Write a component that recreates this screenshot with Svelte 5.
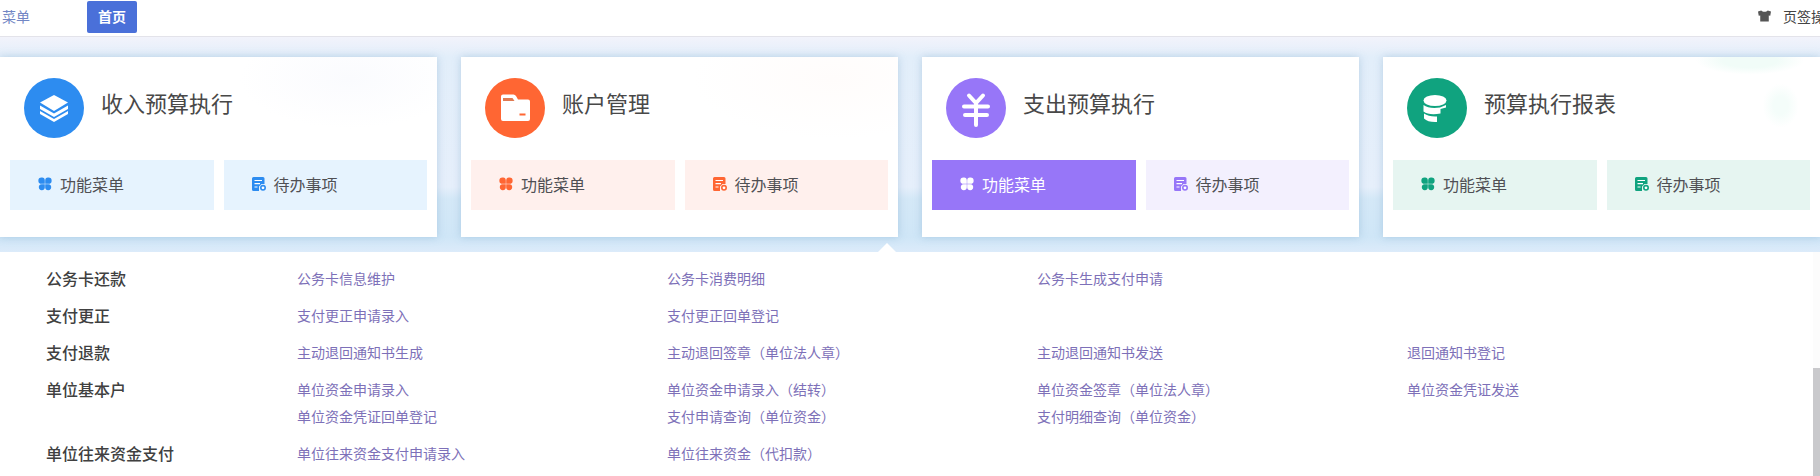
<script lang="ts">
	let activeCard = 'zhichu';

	const cards = [
		{ id: 'shouru', title: '收入预算执行', color: 'blue' },
		{ id: 'zhanghu', title: '账户管理', color: 'orange' },
		{ id: 'zhichu', title: '支出预算执行', color: 'purple' },
		{ id: 'baobiao', title: '预算执行报表', color: 'green' }
	];

	const groups = [
		{ name: '公务卡还款', links: ['公务卡信息维护', '公务卡消费明细', '公务卡生成支付申请'] },
		{ name: '支付更正', links: ['支付更正申请录入', '支付更正回单登记'] },
		{
			name: '支付退款',
			links: ['主动退回通知书生成', '主动退回签章（单位法人章）', '主动退回通知书发送', '退回通知书登记']
		},
		{
			name: '单位基本户',
			links: [
				'单位资金申请录入',
				'单位资金申请录入（结转）',
				'单位资金签章（单位法人章）',
				'单位资金凭证发送',
				'单位资金凭证回单登记',
				'支付申请查询（单位资金）',
				'支付明细查询（单位资金）'
			]
		},
		{ name: '单位往来资金支付', links: ['单位往来资金支付申请录入', '单位往来资金（代扣款）'] }
	];
</script>

<div class="page">
	<header class="topbar">
		<a href="#menu" class="menu-link">菜单</a>
		<button class="tab">首页</button>
		<div class="tools">
			<svg class="skin" viewBox="0 0 14 12" aria-hidden="true">
				<path d="M3.5 0.2C5 2 9 2 10.5 0.2L14 1.2L13.2 5.8L11.6 5.4V11.8H2.4V5.4L0.8 5.8L0 1.2Z" />
			</svg>
			<button class="tab-ops">页签操作</button>
		</div>
	</header>

	<main class="cards">
		{#each cards as card}
			<section class="card {card.color}">
				<div class="card-head">
					<span class="circle">
						{#if card.color === 'blue'}
							<svg viewBox="0 0 60 60" aria-hidden="true">
								<path d="M30 17L44 24.5L30 33L16 24.5Z" fill="#fff" />
								<path d="M16 27.5L30 35.5L44 27.5V31L30 39L16 31Z" fill="#fff" />
								<path d="M16 33L30 41L44 33V36L30 44L16 36Z" fill="#fff" />
							</svg>
						{:else if card.color === 'orange'}
							<svg viewBox="0 0 60 60" aria-hidden="true">
								<path
									d="M18 16.5H28.5Q30 16.5 31 18L33 21.5H43Q45 21.5 45 23.5V41Q45 43 43 43H18Q16 43 16 41V18.5Q16 16.5 18 16.5Z"
									fill="#fff"
								/>
								<path d="M18 20H27.5L29.5 23H18Z" fill="#e07a52" />
								<rect x="34.5" y="35.5" width="6" height="2" fill="#ff6633" />
							</svg>
						{:else if card.color === 'purple'}
							<svg viewBox="0 0 60 60" aria-hidden="true">
								<path
									d="M23 17.5L30 25L37 17.5M30 25V47M18 28.5H42M19 37H41"
									fill="none"
									stroke="#fff"
									stroke-width="4"
									stroke-linecap="round"
								/>
							</svg>
						{:else}
							<svg viewBox="0 0 60 60" aria-hidden="true">
								<ellipse cx="28" cy="22.5" rx="11.5" ry="5.5" fill="#fff" />
								<path d="M16.5 27Q22 31 33 29.5L39 27V29.5L33.5 31V35.5Q22 37.5 16.5 33.5Z" fill="#fff" />
								<path d="M17 35.5Q22 39 30 38.5V44Q21 44.5 17 40.5Z" fill="#fff" />
							</svg>
						{/if}
					</span>
					<h2>{card.title}</h2>
				</div>
				<div class="card-actions">
					<button class="action" class:active={card.id === activeCard}>
						<svg class="icon" viewBox="0 0 14 14" aria-hidden="true">
							<path
								d="M3.5 0.5A3 3 0 0 1 6.8 3.5V6.8H3.5A3 3 0 0 1 3.5 0.5ZM10.5 0.5A3 3 0 0 1 10.5 6.8H7.2V3.5A3 3 0 0 1 10.5 0.5ZM3.5 7.2H6.8V10.5A3 3 0 1 1 3.5 7.2ZM7.2 7.2H10.5A3 3 0 1 1 7.2 10.5Z"
								fill="currentColor"
							/>
						</svg>
						<span>功能菜单</span>
					</button>
					<button class="action">
						<svg class="icon" viewBox="0 0 14 14" aria-hidden="true">
							<path d="M1.5 0H11Q12.5 0 12.5 1.5V7H9.5L7 9.5V14H1.5Q0 14 0 12.5V1.5Q0 0 1.5 0Z" fill="currentColor" />
							<path d="M2.5 3.5H10M2.5 6.7H8M2.5 10H5.5" stroke="#fff" stroke-width="1.2" />
							<circle cx="11" cy="10.8" r="2.2" fill="#fff" stroke="currentColor" stroke-width="1.6" />
						</svg>
						<span>待办事项</span>
					</button>
				</div>
			</section>
		{/each}
		<span class="pointer"></span>
	</main>

	<div class="panel">
		<nav class="groups">
			{#each groups as group}
				<div class="group">
					<h3>{group.name}</h3>
					<div class="links">
						{#each group.links as link}
							<a href="#{link}">{link}</a>
						{/each}
					</div>
				</div>
			{/each}
		</nav>
		<div class="track"><div class="thumb"></div></div>
	</div>
</div>

<style>
	:global(body) {
		margin: 0;
		background: #fff;
	}

	.page {
		display: flex;
		flex-direction: column;
		min-height: 100vh;
		overflow: hidden;
		font-family: 'Noto Sans CJK SC', 'Microsoft YaHei', sans-serif;
		color: #444;
	}

	button {
		border: none;
		padding: 0;
		background: none;
		font-family: inherit;
		color: inherit;
		cursor: pointer;
	}

	.topbar {
		display: flex;
		align-items: center;
		height: 32px;
		padding: 1px 0 3px 2px;
		border-bottom: 1px solid #e3e3ea;
		white-space: nowrap;
		overflow: hidden;
	}

	.menu-link {
		width: 85px;
		padding-bottom: 2px;
		font-size: 14px;
		line-height: 30px;
		color: #7186c4;
		text-decoration: none;
	}

	.tab {
		width: 50px;
		height: 32px;
		padding-bottom: 2px;
		border-radius: 2px;
		background: #4a70d9;
		color: #fff;
		font-size: 14px;
		font-weight: bold;
	}

	.tools {
		display: flex;
		align-items: center;
		gap: 12px;
		width: 62px;
		padding-bottom: 2px;
		margin-left: auto;
	}

	.skin {
		flex: none;
		width: 13px;
		height: 12px;
		fill: #555;
	}

	.tab-ops {
		font-size: 14px;
		color: #444;
	}

	.cards {
		position: relative;
		display: grid;
		grid-template-columns: repeat(4, 1fr);
		gap: 24px;
		padding: 20px 0 15px;
		background: linear-gradient(#f2f3fb 0, #e2eefa 20px, #e6effb 150px, #d4e8f7 162px, #cfe6f7 200px, #dcebfa 100%);
	}

	.card {
		padding: 21px 10px 27px;
		background: #fff;
		box-shadow: 0 0 8px rgba(100, 150, 190, 0.35);
	}

	.card-head {
		display: flex;
		align-items: center;
		gap: 17px;
		padding: 0 14px;
		margin-bottom: 22px;
	}

	.circle {
		width: 60px;
		height: 60px;
		border-radius: 50%;
		background: var(--main);
	}

	.circle svg {
		display: block;
	}

	h2 {
		margin: 0;
		padding-bottom: 12px;
		font-size: 22px;
		font-weight: normal;
		line-height: 32px;
		color: #484848;
	}

	.card-actions {
		display: flex;
		gap: 10px;
	}

	.action {
		flex: 1;
		display: flex;
		align-items: center;
		gap: 8px;
		height: 50px;
		padding: 0 27px 2px 28px;
		background: var(--light);
		font-size: 16px;
		color: #505054;
	}

	.icon {
		width: 14px;
		height: 14px;
		color: var(--main);
	}

	.action.active {
		background: var(--main);
		color: #fff;
	}

	.action.active .icon {
		color: #fff;
	}

	.blue {
		--main: #2d8cf0;
		--light: #e6f3fe;
		background: radial-gradient(ellipse 110px 50px at 80% 12%, #fafbfe, #fff);
	}

	.orange {
		--main: #ff6633;
		--light: #fff0ed;
		background: radial-gradient(ellipse 140px 60px at 85% 12%, #fffcfb, #fff);
	}

	.purple {
		--main: #9776f8;
		--light: #f3f0fe;
	}

	.green {
		--main: #10a37f;
		--light: #e6f5f1;
		background:
			radial-gradient(ellipse 54px 14px at 84% 2%, #f1fcf8 50%, transparent),
			radial-gradient(ellipse 18px 22px at 91% 27%, #f4fdfa 40%, transparent),
			#fff;
	}

	.pointer {
		position: absolute;
		bottom: 0;
		left: calc(50% - 32px);
		border: 9px solid transparent;
		border-top: 0;
		border-bottom-color: #fff;
	}

	.panel {
		flex: 1;
		display: flex;
		background: #fff;
	}

	.groups {
		flex: 1;
		padding: 13px 36px 0 46px;
	}

	.group {
		display: flex;
		margin-bottom: 10px;
	}

	.group:last-child {
		margin-bottom: 0;
	}

	h3 {
		flex: none;
		width: 251px;
		margin: 0;
		font-size: 16px;
		font-weight: 500;
		line-height: 27px;
		color: #404040;
	}

	.links {
		flex: 1;
		display: grid;
		grid-template-columns: repeat(4, 1fr);
	}

	.links a {
		font-size: 14px;
		line-height: 27px;
		color: #7d70b8;
		text-decoration: none;
	}

	.track {
		display: flex;
		align-items: flex-end;
		width: 7px;
		background: #fcfcfc;
	}

	.thumb {
		width: 100%;
		height: 48%;
		background: #c9c9cc;
	}
</style>
